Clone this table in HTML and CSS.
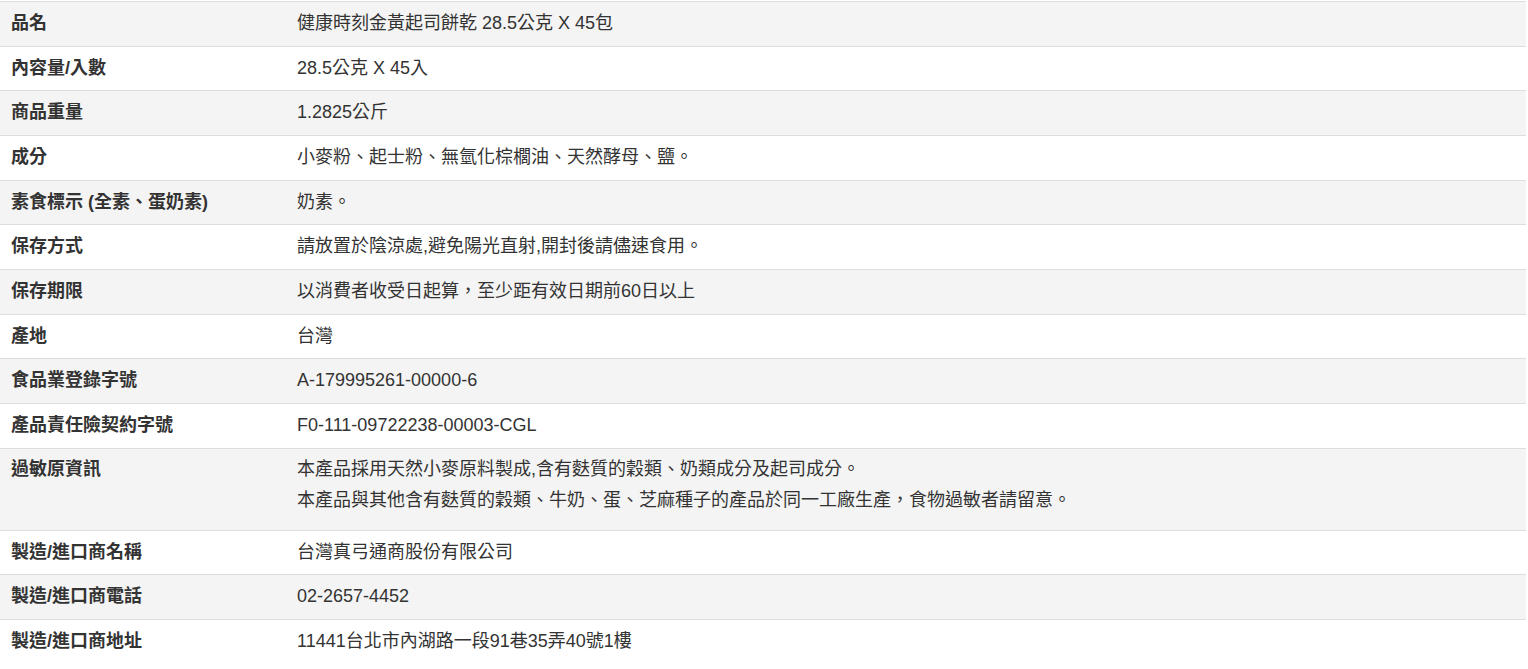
FILE: index.html
```html
<!DOCTYPE html>
<html lang="zh-Hant">
<head>
  <meta charset="UTF-8">
  <title>商品規格</title>
  <link rel="stylesheet" href="styles.css">
</head>
<body>

<table class="spec-table">
  <tbody>
    <tr><th>品名</th><td>健康時刻金黃起司餅乾 28.5公克 X 45包</td></tr>
    <tr><th>內容量/入數</th><td>28.5公克 X 45入</td></tr>
    <tr><th>商品重量</th><td>1.2825公斤</td></tr>
    <tr><th>成分</th><td>小麥粉、起士粉、無氫化棕櫚油、天然酵母、鹽。</td></tr>
    <tr><th>素食標示 (全素、蛋奶素)</th><td>奶素。</td></tr>
    <tr><th>保存方式</th><td>請放置於陰涼處,避免陽光直射,開封後請儘速食用。</td></tr>
    <tr><th>保存期限</th><td>以消費者收受日起算，至少距有效日期前60日以上</td></tr>
    <tr><th>產地</th><td>台灣</td></tr>
    <tr><th>食品業登錄字號</th><td>A-179995261-00000-6</td></tr>
    <tr><th>產品責任險契約字號</th><td>F0-111-09722238-00003-CGL</td></tr>
    <tr class="multi">
      <th>過敏原資訊</th>
      <td>
        <p>本產品採用天然小麥原料製成,含有麩質的穀類、奶類成分及起司成分。</p>
        <p>本產品與其他含有麩質的穀類、牛奶、蛋、芝麻種子的產品於同一工廠生產，食物過敏者請留意。</p>
      </td>
    </tr>
    <tr><th>製造/進口商名稱</th><td>台灣真弓通商股份有限公司</td></tr>
    <tr><th>製造/進口商電話</th><td>02-2657-4452</td></tr>
    <tr><th>製造/進口商地址</th><td>11441台北市內湖路一段91巷35弄40號1樓</td></tr>
  </tbody>
</table>

</body>
</html>
```

FILE: styles.css
```css
body {
  font-family: "Liberation Sans", Arial, "Noto Sans CJK TC", sans-serif;
  font-size: 18px;
  color: #333;
  background-color: #fff;
  margin: 0;
  padding-top: 1px;
}
.spec-table {
  width: 1526px;
  border-collapse: collapse;
  border-spacing: 0;
}
.spec-table th,
.spec-table td {
  text-align: left;
  vertical-align: top;
  padding: 11px 11px;
  line-height: 21.67px;
  border-top: 1px solid #ddd;
}
.spec-table th {
  width: 264px;
  font-weight: bold;
}
.spec-table tr:nth-child(odd) {
  background-color: #f4f4f4;
}
.spec-table .multi th {
  padding-top: 10px;
}
.spec-table .multi td {
  padding-top: 10px;
  padding-bottom: 7.67px;
}
.spec-table .multi p {
  margin: 0 0 10px;
}
```
